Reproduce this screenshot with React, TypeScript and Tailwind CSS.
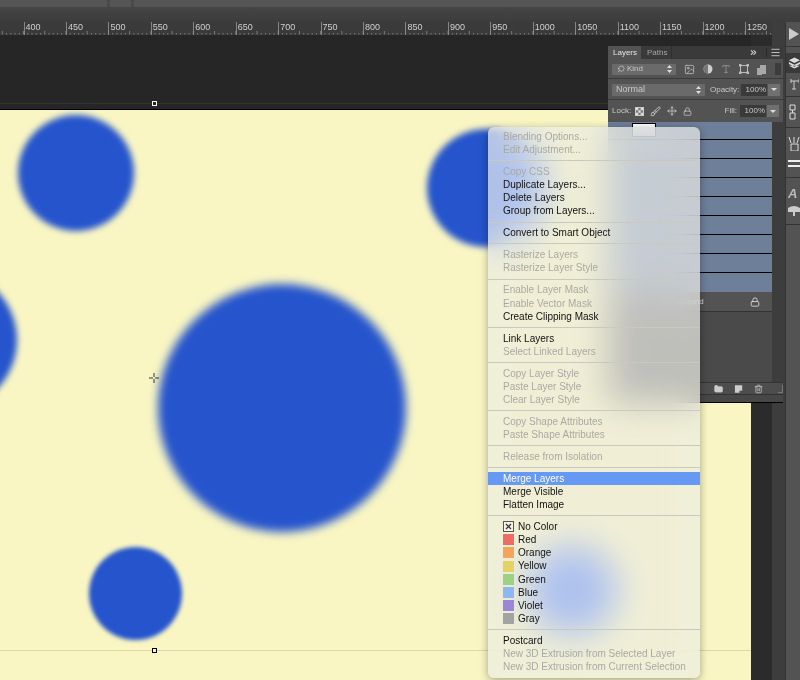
import React from 'react'
import { ChevronsRight, Folder, Lock, Search, Trash2, Type, Image, Brush, Move, Menu } from 'lucide-react'

const labels = [400, 450, 500, 550, 600, 650, 700, 750, 800, 850, 900, 950, 1000, 1050, 1100, 1150, 1200, 1250]

type Item = { t: string; on?: boolean; hi?: boolean; c?: string; x?: boolean }

const groups: Item[][] = [
  [{ t: 'Blending Options...' }, { t: 'Edit Adjustment...' }],
  [{ t: 'Copy CSS' }, { t: 'Duplicate Layers...', on: true }, { t: 'Delete Layers', on: true }, { t: 'Group from Layers...', on: true }],
  [{ t: 'Convert to Smart Object', on: true }],
  [{ t: 'Rasterize Layers' }, { t: 'Rasterize Layer Style' }],
  [{ t: 'Enable Layer Mask' }, { t: 'Enable Vector Mask' }, { t: 'Create Clipping Mask', on: true }],
  [{ t: 'Link Layers', on: true }, { t: 'Select Linked Layers' }],
  [{ t: 'Copy Layer Style' }, { t: 'Paste Layer Style' }, { t: 'Clear Layer Style' }],
  [{ t: 'Copy Shape Attributes' }, { t: 'Paste Shape Attributes' }],
  [{ t: 'Release from Isolation' }],
  [{ t: 'Merge Layers', on: true, hi: true }, { t: 'Merge Visible', on: true }, { t: 'Flatten Image', on: true }],
  [
    { t: 'No Color', on: true, x: true },
    { t: 'Red', on: true, c: 'bg-[#ee6b66]' },
    { t: 'Orange', on: true, c: 'bg-[#f4a55a]' },
    { t: 'Yellow', on: true, c: 'bg-[#e4d262]' },
    { t: 'Green', on: true, c: 'bg-[#9bd383]' },
    { t: 'Blue', on: true, c: 'bg-[#8cb7f0]' },
    { t: 'Violet', on: true, c: 'bg-[#9b86d8]' },
    { t: 'Gray', on: true, c: 'bg-[#a3a3a3]' },
  ],
  [{ t: 'Postcard', on: true }, { t: 'New 3D Extrusion from Selected Layer' }, { t: 'New 3D Extrusion from Current Selection' }],
]

const Ruler = () => (
  <div className="relative flex h-[13px] w-[772px] overflow-hidden bg-[#3a3a3a] text-[9px] leading-[11px] text-[#cfcfcf]">
    <div className="w-[23.5px] shrink-0" />
    {labels.map((l) => (
      <div key={l} className="h-full w-[42.45px] shrink-0 border-l border-[#858585] pl-px">{l}</div>
    ))}
    <svg className="absolute bottom-0 left-0" width="772" height="4">
      {Array.from({ length: 182 }).map((_, i) => (
        <line key={i} x1={2.3 + i * 4.245} x2={2.3 + i * 4.245} y1={i % 5 === 0 ? 0 : 2} y2="3.5" stroke="#8f8f8f" strokeWidth="0.8" />
      ))}
    </svg>
  </div>
)

const Handle = ({ className }: { className: string }) => (
  <div className={`absolute h-[5px] w-[5px] border ${className}`} />
)

const Canvas = () => (
  <div className="relative h-[570px] w-[751px] overflow-hidden bg-[#f9f6c4]">
    <div className="absolute left-[18px] top-[5px] h-[116px] w-[116px] rounded-full bg-[#2554cc] blur-[3px]" />
    <div className="absolute left-[427px] top-[19px] h-[118px] w-[118px] rounded-full bg-[#2554cc] blur-[3px]" />
    <div className="absolute left-[-123px] top-[160px] h-[140px] w-[140px] rounded-full bg-[#2554cc] blur-[3px]" />
    <div className="absolute left-[158px] top-[174px] h-[248px] w-[248px] rounded-full bg-[#2554cc] blur-[5px]" />
    <div className="absolute left-[89px] top-[437px] h-[93px] w-[93px] rounded-full bg-[#2554cc] blur-[2px]" />
    <div className="absolute left-[527px] top-[435px] h-[90px] w-[90px] rounded-full bg-[#2554cc]" />
    <div className="absolute left-0 top-[540px] h-px w-full bg-[#dcd9a5]" />
    <Handle className="left-[152px] top-[538px] border-black bg-[#f9f6c4]" />
    <svg className="absolute left-[149px] top-[263px]" width="10" height="10" viewBox="0 0 10 10">
      <path d="M5 0v4M5 6v4M0 5h4M6 5h4" stroke="#333" strokeWidth="1" fill="none" />
    </svg>
  </div>
)

const Field = ({ children, className }: { children: React.ReactNode; className: string }) => (
  <div className={`flex items-center rounded-[1px] bg-[#6a6a6a] ${className}`}>{children}</div>
)

const Updown = () => (
  <svg className="ml-auto mr-1" width="5" height="8" viewBox="0 0 5 8">
    <path d="M2.5 0L5 3H0zM2.5 8L0 5h5z" fill="#ddd" />
  </svg>
)

const ValueField = ({ value }: { value: string }) => (
  <div className="flex h-[12px]">
    <div className="flex w-[26px] items-center justify-end bg-[#3a3a3a] pr-[1px] text-[#c8c8c8]">{value}</div>
    <div className="ml-px flex w-[12px] items-center justify-center bg-[#707070]">
      <div className="h-0 w-0 border-x-[3px] border-t-[3px] border-x-transparent border-t-[#ddd]" />
    </div>
  </div>
)

const LayersPanel = () => (
  <div className="absolute left-[608px] top-[46px] flex h-[357px] w-[175px] flex-col bg-[#3d3d3d] text-[8px] text-[#c8c8c8] [font-family:'Liberation_Sans',sans-serif]">
    <div className="flex h-[13px] items-stretch bg-[#3a3a3a] leading-[13px]">
      <div className="w-[33px] bg-[#535353] pl-[5px] text-[#e4e4e4]">Layers</div>
      <div className="w-[31px] border-r border-[#2e2e2e] pl-[6px] text-[#a5a5a5]">Paths</div>
      <ChevronsRight className="ml-auto mr-[8px] mt-[2px] text-[#ccc]" size={9} strokeWidth={3} />
      <div className="my-[2px] mr-[3px] w-px bg-[#2a2a2a]" />
      <Menu className="mr-[2px] mt-[1px] text-[#ccc]" size={11} />
    </div>
    <div className="flex h-[20px] items-center gap-[8px] border-b border-[#3a3a3a] bg-[#535353] pl-[4px] pt-px">
      <Field className="h-[11px] w-[64px] gap-[2px] pl-[5px]">
        <Search size={8} className="-scale-x-100" />
        <span>Kind</span>
        <Updown />
      </Field>
      <Image size={11} strokeWidth={1.6} />
      <svg width="10" height="10" viewBox="0 0 10 10"><circle cx="5" cy="5" r="4.5" fill="#cfcfcf" /><path d="M5 .5a4.5 4.5 0 0 0 0 9z" fill="#777" /></svg>
      <Type size={10} strokeWidth={1.6} className="text-[#aaa]" />
      <svg width="10" height="10" viewBox="0 0 10 10"><path d="M1.5 1.5h7v7h-7z" fill="none" stroke="#bbb" /><path d="M0 0h2.5v2.5H0zM7.5 0H10v2.5H7.5zM0 7.5h2.5V10H0zM7.5 7.5H10V10H7.5z" fill="#bbb" /></svg>
      <svg width="10" height="11" viewBox="0 0 10 11"><path d="M3 1h6v9H3zM0 4h5v7H0z" fill="#a8a8a8" /></svg>
      <div className="h-[12px] w-[6px] bg-[#3c3c3c]" />
    </div>
    <div className="flex h-[21px] items-center border-b border-[#3a3a3a] bg-[#535353] pl-[4px] pt-px">
      <Field className="h-[12px] w-[93px] pl-[4px]">
        <span className="text-[9px]">Normal</span>
        <Updown />
      </Field>
      <span className="ml-[5px] w-[31px]">Opacity:</span>
      <ValueField value="100%" />
    </div>
    <div className="flex h-[22px] items-center bg-[#535353] pl-[4px]">
      <span className="w-[23px]">Lock:</span>
      <svg className="mr-[6px]" width="9" height="9" viewBox="0 0 9 9">
        <rect x=".5" y=".5" width="8" height="8" fill="#777" stroke="#ccc" />
        <path d="M1 1h2.3v2.3H1zM5.7 1H8v2.3H5.7zM3.3 3.3h2.4v2.4H3.3zM1 5.7h2.3V8H1zM5.7 5.7H8V8H5.7z" fill="#ddd" />
      </svg>
      <Brush className="mr-[6px]" size={11} />
      <Move className="mr-[6px]" size={10} />
      <Lock size={9} />
      <span className="ml-auto mr-[3px]">Fill:</span>
      <div className="mr-[4px]"><ValueField value="100%" /></div>
    </div>
    <div className="flex h-[190px]">
      <div className="w-[164px]">
        <div className="relative h-[18px] border-b border-black bg-[#6e7f9a]">
          <div className="absolute left-[24px] top-[1px] h-[14px] w-[24px] border border-black bg-white" />
        </div>
        {Array.from({ length: 7 }).map((_, i) => (
          <div key={i} className="h-[19px] border-b border-black bg-[#6e7f9a]" />
        ))}
        <div className="h-[19px] bg-[#6e7f9a]" />
        <div className="flex h-[20px] items-center justify-between border-b border-[#333] bg-[#535353] pl-[53px] pr-[12px] text-[#ddd]">
          <span>Background</span>
          <Lock size={10} />
        </div>
      </div>
      <div className="flex-1 bg-[#3d3d3d]" />
    </div>
    <div className="h-[70px] w-[164px] bg-[#4a4a4a]" />
    <div className="flex h-[13px] items-center gap-[11px] border-y border-[#333] bg-[#4d4d4d] pl-[106px] text-[#ccc]">
      <Folder size={10} fill="#ccc" />
      <svg width="10" height="10" viewBox="0 0 10 10"><path d="M1 1h8v6H6v2H1z" fill="#ccc" /></svg>
      <Trash2 size={10} />
      <div className="ml-[4px] h-[8px] w-[5px] border-b border-r border-[#777]" />
    </div>
    <div className="flex-1 border-b border-black bg-[#474747]" />
  </div>
)

const ContextMenu = () => (
  <div className="absolute left-[488px] top-[127px] w-[212px] rounded-[6px] bg-[#ecece6]/72 pb-[5px] pt-[3px] text-[10px] leading-[13.15px] shadow-[0_2px_8px_rgba(0,0,0,0.35)] backdrop-blur-[18px] backdrop-saturate-150 [font-family:'Liberation_Sans',sans-serif]">
    {groups.map((g, i) => (
      <div key={i}>
        {i > 0 && <div className="my-[3.9px] h-px bg-[#c9c9c0]" />}
        {g.map((it) => (
          <div
            key={it.t}
            className={`flex h-[13.15px] items-center pl-[15px] ${it.hi ? 'bg-[#6699f3] text-white' : it.on ? 'text-[#111]' : 'text-[#a9a9a3]'}`}
          >
            {it.c && <div className={`mr-[4px] h-[11px] w-[11px] ${it.c}`} />}
            {it.x && (
              <svg className="mr-[4px]" width="11" height="11" viewBox="0 0 11 11">
                <rect x=".5" y=".5" width="10" height="10" fill="#f4f3e8" stroke="#555" />
                <path d="M3 3l5 5M8 3l-5 5" stroke="#333" strokeWidth="1.2" />
              </svg>
            )}
            <span>{it.t}</span>
          </div>
        ))}
      </div>
    ))}
  </div>
)

const Dock = () => (
  <div className="flex w-[15px] flex-col border-l border-[#333] bg-[#535353] text-[#ddd]">
    <div className="flex h-[24px] items-center pl-[3px]">
      <svg width="10" height="12" viewBox="0 0 10 12"><path d="M0 0l10 6-10 6z" fill="#ccc" /></svg>
    </div>
    <div className="flex h-[50px] flex-col gap-[6px] border-t border-[#333] pt-[6px]">
      <div className="flex h-[20px] items-center bg-[#3a3a3a] pl-[2px]">
        <svg width="13" height="12" viewBox="0 0 13 12"><path d="M7 0l6 3-6 3-6-3zM1 5l6 3 6-3v2L7 10 1 7zM1 9l6 3 6-3" fill="#ddd" /></svg>
      </div>
      <svg className="ml-[3px]" width="10" height="12" viewBox="0 0 10 12"><path d="M2 2h8M5 2v8M2 0v4M10 0v4M3 10h4" stroke="#ccc" fill="none" /></svg>
    </div>
    <div className="flex h-[31px] items-center border-t border-[#333] pl-[3px]">
      <svg width="7" height="16" viewBox="0 0 7 16"><path d="M1 1h5v5H1zM1 9h5v6H1z" fill="none" stroke="#ddd" /><path d="M3.5 6v3" stroke="#ddd" /></svg>
    </div>
    <div className="flex h-[50px] flex-col gap-[9px] border-t border-[#333] pl-[2px] pt-[9px]">
      <svg width="12" height="14" viewBox="0 0 12 14"><path d="M1 0l2 6M6 0v6M11 0L9 6M3 7h7v7H3z" stroke="#ddd" fill="none" /></svg>
      <svg width="12" height="7" viewBox="0 0 12 7"><path d="M0 0h12v2H0zM0 5h12v2H0z" fill="#eee" /></svg>
    </div>
    <div className="flex flex-col gap-[5px] border-t border-[#333] pl-[2px] pt-[9px]">
      <span className="text-[13px] font-bold italic leading-[14px] text-[#bbb]">A</span>
      <svg width="12" height="10" viewBox="0 0 12 10"><path d="M0 2q6-4 12 0v4H7v4H5V6H0z" fill="#ccc" /></svg>
    </div>
    <div className="mt-[8px] flex-1 border-t border-[#333]" />
  </div>
)

export default function App() {
  return (
    <div className="relative flex h-[680px] w-[800px] flex-col overflow-hidden bg-[#3d3d3d] [font-family:'Liberation_Sans',sans-serif]">
      <div className="flex h-[7px] bg-[#555]">
        <div className="ml-[107px] h-full w-[3px] bg-[#4a4a4a]" />
        <div className="ml-[21px] h-full w-[3px] bg-[#4a4a4a]" />
      </div>
      <div className="h-[15px] bg-gradient-to-b from-[#454545] to-[#3c3c3c]" />
      <div className="flex flex-1">
        <div className="flex w-[772px] flex-col">
          <Ruler />
          <div className="flex flex-1 bg-[#2b2b2b]">
            <div className="w-[751px]">
              <div className="relative h-[75px] border-b border-black bg-[#262626]">
                <div className="absolute bottom-[5px] left-0 h-px w-full bg-[#333]" />
                <Handle className="bottom-[3px] left-[152px] border-white bg-[#262626]" />
              </div>
              <Canvas />
            </div>
          </div>
        </div>
        <div className="w-[13px] bg-[#3d3d3d]" />
        <Dock />
      </div>
      <LayersPanel />
      <ContextMenu />
    </div>
  )
}
